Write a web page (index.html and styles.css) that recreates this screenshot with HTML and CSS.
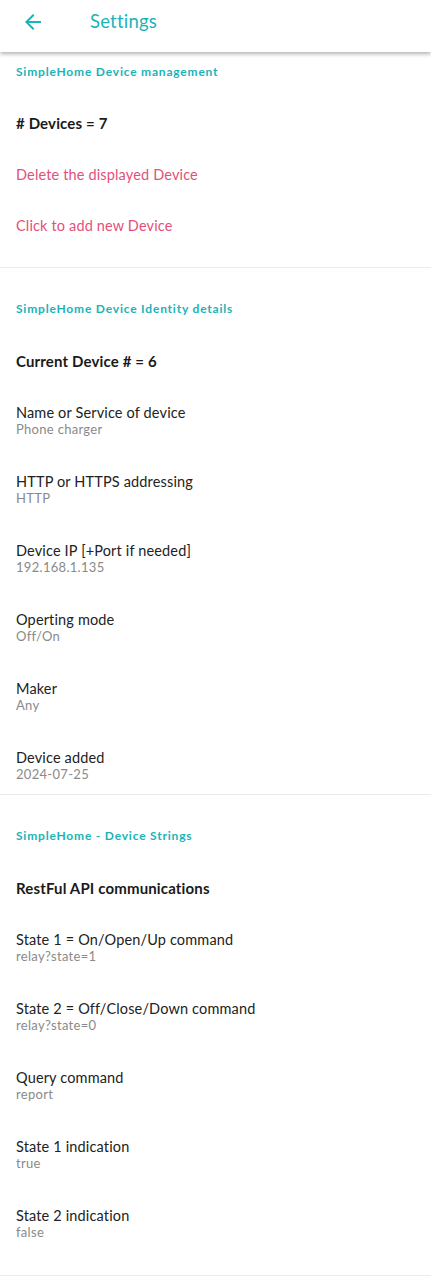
FILE: index.html
```html
<!DOCTYPE html>
<html>
<head>
  <meta charset="utf-8">
  <link rel="stylesheet" href="styles.css">
</head>
<body>
  <div class="appbar">
    <span class="back">
      <svg width="24" height="24" viewBox="0 0 24 24"><path d="M20 11H7.83l5.59-5.59L12 4l-8 8 8 8 1.41-1.41L7.83 13H20v-2z" fill="#1ab3b8"/></svg>
    </span>
    <span class="title">Settings</span>
  </div>

  <div class="section first">
    <div class="section-title">SimpleHome Device management</div>
    <div class="row"><span class="label bold"># Devices = 7</span></div>
    <div class="row"><span class="label action">Delete the displayed Device</span></div>
    <div class="row"><span class="label action">Click to add new Device</span></div>
  </div>

  <div class="section identity">
    <div class="section-title">SimpleHome Device Identity details</div>
    <div class="row"><span class="label bold">Current Device # = 6</span></div>
    <div class="row two">
      <div class="label">Name or Service of device</div>
      <div class="summary">Phone charger</div>
    </div>
    <div class="row two">
      <div class="label">HTTP or HTTPS addressing</div>
      <div class="summary">HTTP</div>
    </div>
    <div class="row two">
      <div class="label">Device IP [+Port if needed]</div>
      <div class="summary">192.168.1.135</div>
    </div>
    <div class="row two">
      <div class="label">Operting mode</div>
      <div class="summary">Off/On</div>
    </div>
    <div class="row two">
      <div class="label">Maker</div>
      <div class="summary">Any</div>
    </div>
    <div class="row two">
      <div class="label">Device added</div>
      <div class="summary">2024-07-25</div>
    </div>
  </div>

  <div class="section">
    <div class="section-title">SimpleHome - Device Strings</div>
    <div class="row"><span class="label bold">RestFul API communications</span></div>
    <div class="row two">
      <div class="label">State 1 = On/Open/Up command</div>
      <div class="summary">relay?state=1</div>
    </div>
    <div class="row two">
      <div class="label">State 2 = Off/Close/Down command</div>
      <div class="summary">relay?state=0</div>
    </div>
    <div class="row two">
      <div class="label">Query command</div>
      <div class="summary">report</div>
    </div>
    <div class="row two">
      <div class="label">State 1 indication</div>
      <div class="summary">true</div>
    </div>
    <div class="row two">
      <div class="label">State 2 indication</div>
      <div class="summary">false</div>
    </div>
  </div>
</body>
</html>
```

FILE: styles.css
```css
body {
  margin: 0;
  background: #fff;
  font-family: Lato, "Open Sans", sans-serif;
  color: #222;
}
.appbar {
  height: 52px;
  display: flex;
  align-items: flex-start;
  padding-top: 10px;
  box-sizing: border-box;
  box-shadow: 0 2px 4px rgba(0, 0, 0, 0.3);
  position: relative;
  z-index: 1;
}
.back {
  width: 24px;
  height: 24px;
  margin-left: 21px;
  margin-top: 0;
}
.title {
  margin-left: 45px;
  font-size: 18.5px;
  line-height: 22px;
  letter-spacing: 0.2px;
  color: #1ab3b8;
}
.section {
  padding: 0 16px 16.5px;
  border-bottom: 1px solid #ebebeb;
}
.section.identity {
  padding-bottom: 0;
}
.section.identity .row.two:last-child {
  padding-bottom: 12.5px;
}
.section-title {
  padding: 33px 0 18.5px;
  font-size: 12px;
  line-height: 16px;
  font-weight: 700;
  letter-spacing: 0.8px;
  color: #1ab3b8;
}
.section.first .section-title {
  padding-top: 12px;
  padding-bottom: 17.5px;
}
.row {
  height: 51px;
  display: flex;
  align-items: center;
}
.row.two {
  height: auto;
  display: block;
  padding: 16px 0 19px;
}
.label {
  font-size: 14.5px;
  line-height: 19px;
  letter-spacing: 0.15px;
  color: #222;
}
.label.bold {
  font-size: 15px;
  font-weight: 700;
  letter-spacing: 0.15px;
  color: #1a1a1a;
}
.label.action {
  color: #e3507a;
}
.summary {
  font-size: 13px;
  line-height: 15px;
  letter-spacing: 0.3px;
  color: #8a8a8a;
}
```
